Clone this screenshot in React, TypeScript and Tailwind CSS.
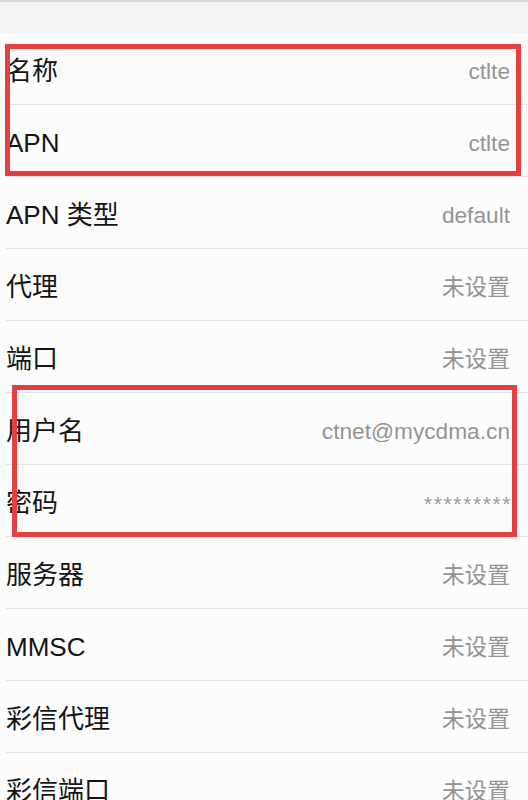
const rows: { label: string; value: string }[] = [
  { label: '名称', value: 'ctlte' },
  { label: 'APN', value: 'ctlte' },
  { label: 'APN 类型', value: 'default' },
  { label: '代理', value: '未设置' },
  { label: '端口', value: '未设置' },
  { label: '用户名', value: 'ctnet@mycdma.cn' },
  { label: '密码', value: '*********' },
  { label: '服务器', value: '未设置' },
  { label: 'MMSC', value: '未设置' },
  { label: '彩信代理', value: '未设置' },
  { label: '彩信端口', value: '未设置' },
]

function Row({ label, value }: { label: string; value: string }) {
  const masked = value.startsWith('*')
  return (
    <div className="pl-[6px]">
      <div className="flex h-[71px] items-center justify-between pr-[18px] pt-[5px]">
        <span className="text-[26px] leading-none text-[#141414]">{label}</span>
        <span
          className={
            masked
              ? '-mr-[2px] text-[21px] leading-none tracking-[1.6px] text-[#9a9a9a]'
              : 'text-[22.7px] leading-none text-[#949494]'
          }
        >
          {value}
        </span>
      </div>
      <div className="h-px bg-[#e4e4e4]" />
    </div>
  )
}

export default function App() {
  return (
    <div
      className="relative h-[800px] w-[528px] overflow-hidden bg-[#fcfcfc]"
      style={{ fontFamily: '"Liberation Sans", "Noto Sans CJK SC", sans-serif' }}
    >
      <div className="h-[33px] border-t-2 border-[#d8d8d8] bg-[#f3f3f3]" />
      {rows.map((r) => (
        <Row key={r.label} label={r.label} value={r.value} />
      ))}

      {/* annotation boxes */}
      <div className="absolute left-[5px] top-[44px] h-[132px] w-[516px] border-[5px] border-[#e5403f]" />
      <div className="absolute left-[12px] top-[385px] h-[152px] w-[505px] border-[5px] border-[#e5403f]" />
    </div>
  )
}
